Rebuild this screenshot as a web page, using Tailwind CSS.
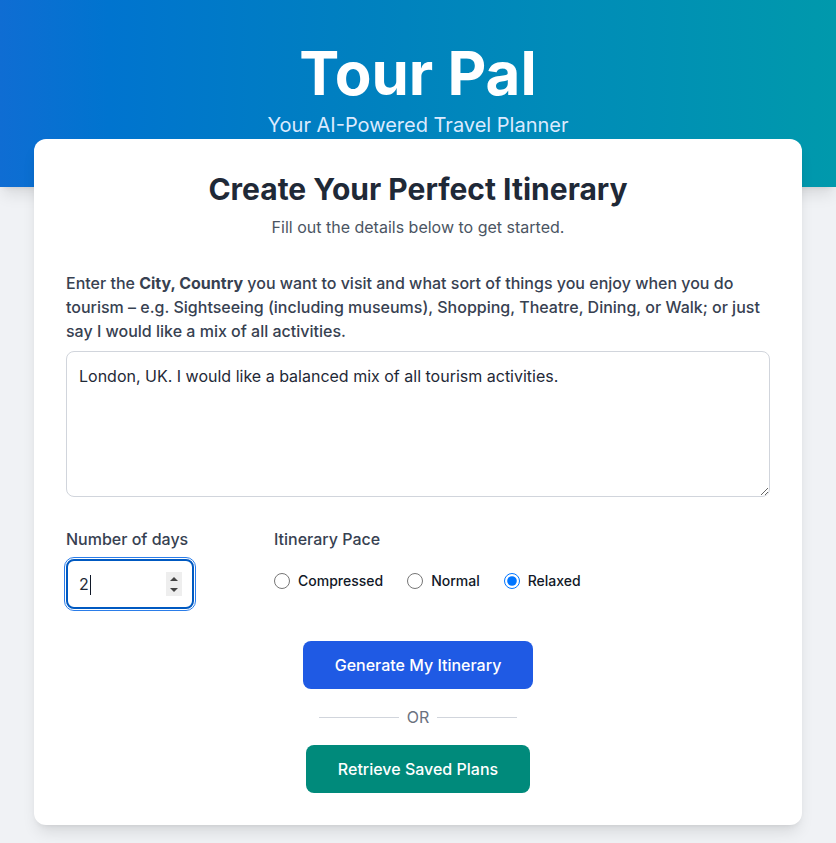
<!DOCTYPE html>
<html lang="en">
<head>
<meta charset="utf-8">
<meta name="viewport" content="width=device-width, initial-scale=1">
<title>Tour Pal</title>
<script src="https://cdn.jsdelivr.net/npm/@tailwindcss/browser@4"></script>
</head>
<body class="min-h-screen bg-[#f0f2f5] font-['Inter',sans-serif] text-[#1f2937]">
<header class="bg-[linear-gradient(to_right,#0f6dd3_0%,#0074cf_13%,#0080c0_42%,#008cb8_68%,#0099ac_100%)] px-4 pt-10 pb-12 text-center text-white shadow-lg">
  <h1 class="text-[60px] leading-[67px] font-bold">Tour Pal</h1>
  <p class="mt-1 text-xl text-[#dbeafe]">Your AI-Powered Travel Planner</p>
</header>
<main class="relative mx-auto -mt-12 max-w-3xl pb-4">
  <section class="rounded-xl bg-white p-8 shadow-lg">
    <h2 class="text-center text-3xl font-bold">Create Your Perfect Itinerary</h2>
    <p class="mt-2 text-center text-[#4b5563]">Fill out the details below to get started.</p>
    <form class="mt-8">
      <label for="prefs" class="block font-medium text-[#374151]">Enter the <strong>City, Country</strong> you want to visit and what sort of things you enjoy when you do tourism – e.g. Sightseeing (including museums), Shopping, Theatre, Dining, or Walk; or just say I would like a mix of all activities.</label>
      <textarea id="prefs" rows="5" class="mt-2 block w-full rounded-lg border border-gray-300 p-3">London, UK. I would like a balanced mix of all tourism activities.</textarea>
      <div class="mt-[30px] flex">
        <div class="w-52">
          <label for="days" class="block font-medium text-[#374151]">Number of days</label>
          <div class="relative mt-2 w-32">
            <input id="days" type="number" value="2" autofocus class="block w-full rounded-lg border-2 border-[#0059c1] px-[11px] py-[11px] caret-transparent outline-1 outline-offset-1 outline-[#2b7de9] [&::-webkit-inner-spin-button]:opacity-0">
            <span class="absolute top-4 left-6 h-5 w-px bg-gray-900" aria-hidden="true"></span>
            <svg class="pointer-events-none absolute top-[13px] right-3 h-6 w-4" viewBox="0 0 16 24" aria-hidden="true">
              <path d="M0 0h16v24H0z" fill="#eeeeee"/>
              <path d="M4 9l4-4 4 4zM4 16l4 4 4-4z" fill="#444444"/>
            </svg>
          </div>
        </div>
        <fieldset>
          <legend class="font-medium text-[#374151]">Itinerary Pace</legend>
          <div class="mt-5 flex gap-6 text-sm font-medium text-[#111827]">
            <label class="flex items-center gap-2"><input type="radio" name="pace" class="size-4">Compressed</label>
            <label class="flex items-center gap-2"><input type="radio" name="pace" class="size-4">Normal</label>
            <label class="flex items-center gap-2"><input type="radio" name="pace" class="size-4" checked>Relaxed</label>
          </div>
        </fieldset>
      </div>
      <div class="mt-8 flex flex-col items-center">
        <button type="submit" class="rounded-lg bg-[#1f5ae4] px-8 py-3 font-medium text-white">Generate My Itinerary</button>
        <div class="my-4 flex items-center gap-2 text-[#6b7280]"><span class="h-px w-20 bg-gray-300"></span>OR<span class="h-px w-20 bg-gray-300"></span></div>
        <button type="button" class="rounded-lg bg-[#008a7b] px-8 py-3 font-medium text-white">Retrieve Saved Plans</button>
      </div>
    </form>
  </section>
</main>
</body>
</html>
